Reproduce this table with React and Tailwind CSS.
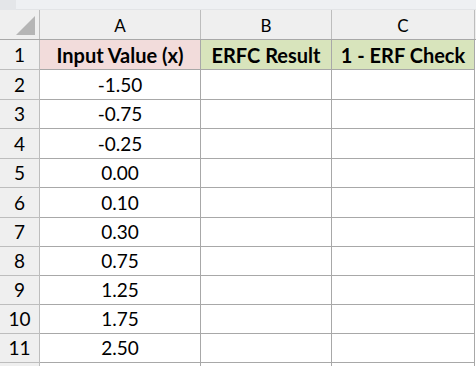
import React from 'react';

// Row heights measured from the sheet (each includes its 1px bottom border)
const rows = [
    { n: 1, h: 30, header: true },
    { n: 2, h: 30, v: '-1.50' },
    { n: 3, h: 29, v: '-0.75' },
    { n: 4, h: 30, v: '-0.25' },
    { n: 5, h: 29, v: '0.00' },
    { n: 6, h: 30, v: '0.10' },
    { n: 7, h: 29, v: '0.30' },
    { n: 8, h: 29, v: '0.75' },
    { n: 9, h: 29, v: '1.25' },
    { n: 10, h: 29, v: '1.75' },
    { n: 11, h: 29, v: '2.50' },
    { n: '', h: 29, v: '' },
];

const font = { fontFamily: 'Lato, "Open Sans", sans-serif' };

export default function App() {
    return (
        <div className="w-[476px] h-[366px] bg-white overflow-hidden text-black" style={font}>
            {/* strip left of the formula bar */}
            <div className="h-[10px] flex">
                <div className="w-[16px] bg-[#e4e6e9]"></div>
                <div className="flex-1 bg-[#eef0f3] border-b border-[#e2e4e7]"></div>
            </div>

            {/* column headers */}
            <div className="flex h-[30px] bg-[#efefef] border-b border-[#a8a8a8]">
                <div className="w-[40px] border-r border-[#bdbdbd] relative">
                    <svg className="absolute left-[16px] top-[6px]" width="20" height="20" viewBox="0 0 20 20">
                        <polygon points="19,0 19,19 0,19" fill="#b5b5b5" />
                    </svg>
                </div>
                <div className="w-[161px] border-r border-[#bdbdbd] flex items-center justify-center text-[17px] pt-[3px]">A</div>
                <div className="w-[131px] border-r border-[#bdbdbd] flex items-center justify-center text-[17px] pt-[3px]">B</div>
                <div className="w-[143px] border-r border-[#bdbdbd] flex items-center justify-center text-[17px] pt-[3px]">C</div>
            </div>

            {rows.map((r, i) => (
                <div key={i} className="flex" style={{ height: r.h }}>
                    <div className="w-[40px] bg-[#efefef] border-r border-b border-[#bdbdbd] flex items-center justify-center text-[19px] pt-[1px]">
                        {r.n}
                    </div>
                    {r.header ? (
                        <>
                            <div className="w-[161px] bg-[#f2dcdb] border-r border-b border-[#a8a8a8] flex items-center justify-center text-[20px] font-bold pt-[1px]">
                                Input Value (x)
                            </div>
                            <div className="w-[131px] bg-[#d8e4bc] border-r border-b border-[#a8a8a8] flex items-center justify-center text-[20px] font-bold pt-[1px]">
                                ERFC Result
                            </div>
                            <div className="w-[143px] bg-[#d8e4bc] border-r border-b border-[#a8a8a8] flex items-center justify-center text-[20px] font-bold pt-[1px]">
                                1 - ERF Check
                            </div>
                        </>
                    ) : (
                        <>
                            <div className="w-[161px] border-r border-b border-[#a8a8a8] flex items-center justify-center text-[19px] pt-[1px]">
                                {r.v}
                            </div>
                            <div className="w-[131px] border-r border-b border-[#a8a8a8]"></div>
                            <div className="w-[143px] border-r border-b border-[#a8a8a8]"></div>
                        </>
                    )}
                </div>
            ))}
        </div>
    );
}
